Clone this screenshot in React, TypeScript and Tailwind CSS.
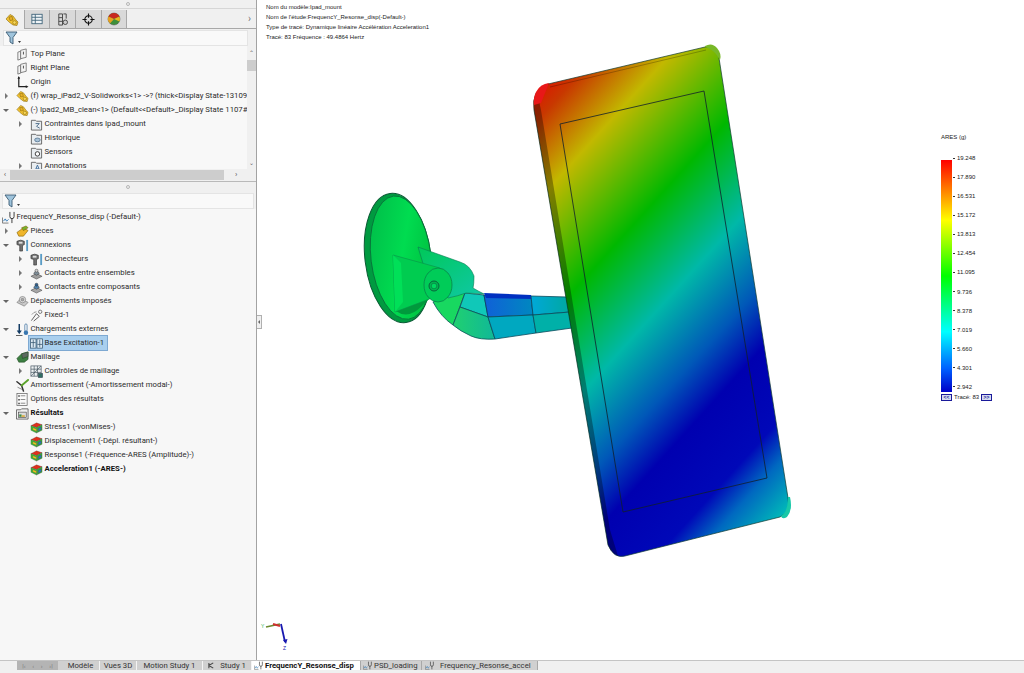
import type { ReactNode } from "react";

type IconName =
  | "plane" | "origin" | "part" | "folderS" | "folderH" | "folderC" | "folderA"
  | "study" | "pieces" | "bolt" | "contactA" | "contactB" | "fixtures" | "fixed"
  | "load" | "excite" | "mesh" | "meshCtl" | "damping" | "options" | "results" | "plot";

const icons: Record<IconName, ReactNode> = {
  plane: (
    <g fill="#f4f4f4" stroke="#6f6f6f" strokeWidth="0.9">
      <path d="M2 4.5 L5 3.5 V12 L2 13 Z" />
      <path d="M5 2.5 L11 1 V10 L5 11.5 Z" />
      <path d="M8 4 V7" stroke="#333" />
    </g>
  ),
  origin: (
    <g stroke="#222" fill="#222">
      <path d="M3 1 V11.5 H12" fill="none" strokeWidth="1.3" />
      <path d="M3 0 L1.6 3 H4.4 Z M13.5 11.5 L10.5 10 V13 Z" stroke="none" />
    </g>
  ),
  part: (
    <g stroke="#8a6a10" strokeWidth="0.6">
      <path d="M1 6 L5 1.5 L8 3 L11 7 L13 9 L12 12.5 L8 12 L4 9 Z" fill="#f2c230" />
      <path d="M4 4 L7 3.5 L8 7 L5 7.5 Z" fill="#e8b028" />
      <circle cx="9.5" cy="9.5" r="1.8" fill="#f8d858" />
    </g>
  ),
  folderS: <Folder glyph={<path d="M6 6 L10 6 L7 9 L10.5 11" fill="none" stroke="#4a6a88" strokeWidth="1" />} />,
  folderH: <Folder glyph={<ellipse cx="8" cy="8.5" rx="3" ry="2" fill="#a9c3d8" stroke="#4a6a88" strokeWidth="0.8" />} />,
  folderC: <Folder glyph={<circle cx="8" cy="8.5" r="2.4" fill="#fff" stroke="#333" strokeWidth="1" />} />,
  folderA: <Folder glyph={<path d="M5.5 11.5 L8 5.5 L10.5 11.5 M6.5 9.5 H9.5" fill="none" stroke="#3b6a9a" strokeWidth="1" />} />,
  study: (
    <g fill="none" strokeWidth="1">
      <path d="M0.5 7 V13 H7" stroke="#777" />
      <path d="M1.5 11 L3.5 8.5 L5 11 L7 9" stroke="#2f78b8" />
      <path d="M8.5 1 V6 A2 2 0 0 0 13 6 V1 M10.7 8 V13" stroke="#333" />
    </g>
  ),
  pieces: (
    <g stroke="#7a5a00" strokeWidth="0.6">
      <path d="M1 8 L8 3 L13 6 L8 12 L3 12 Z" fill="#efb52a" />
      <path d="M6 3 L11 1 L13 3 L8 6 Z" fill="#77b32c" />
    </g>
  ),
  bolt: (
    <g>
      <path d="M1 2.5 Q5 0 9 2.5 V6 L7 7 V13 H4 V7 L1 6 Z" fill="#707070" stroke="#222" strokeWidth="0.6" />
      <rect x="3" y="3" width="4" height="2" fill="#ddd" />
      <rect x="11" y="1" width="2" height="12" fill="#5a9cc5" />
    </g>
  ),
  contactA: (
    <g stroke="#333" strokeWidth="0.5">
      <path d="M1 10 L7 7 L13 10 L7 13 Z" fill="#9d9d9d" />
      <path d="M4 7 Q7 1 10 7 L7 9 Z" fill="#7f8f9a" />
      <circle cx="7" cy="4" r="1.6" fill="#d2d2d2" />
    </g>
  ),
  contactB: (
    <g stroke="#333" strokeWidth="0.5">
      <path d="M1 10 L7 7 L13 10 L7 13 Z" fill="#a6a6a6" />
      <path d="M4 7 Q7 1 10 7 L7 9 Z" fill="#4f82ad" />
      <circle cx="7" cy="4" r="1.6" fill="#2c5f90" />
    </g>
  ),
  fixtures: (
    <g stroke="#777" strokeWidth="0.7" fill="#c9c9c9">
      <path d="M1 8 L5 4 L13 8 L9 12 Z" />
      <circle cx="7" cy="5" r="3.4" fill="#dcdcdc" />
      <circle cx="7" cy="5" r="1.4" fill="#aaa" />
    </g>
  ),
  fixed: (
    <g fill="none" stroke="#444" strokeWidth="0.9">
      <path d="M1.5 12.5 L7 5 L10 8 L4 13" />
      <path d="M2 6 Q4 3 7 3" stroke="#888" />
      <circle cx="11" cy="3" r="1.8" stroke="#666" />
    </g>
  ),
  load: (
    <g>
      <path d="M3.5 1 V9" stroke="#123a62" strokeWidth="1.6" />
      <path d="M0.8 8 H6.2 L3.5 12 Z" fill="#123a62" />
      <rect y="13" width="7" height="1" fill="#555" />
      <rect x="9.5" y="1" width="2.4" height="8" rx="1.2" fill="#fff" stroke="#3a6d9c" strokeWidth="0.8" />
      <circle cx="10.7" cy="10.5" r="2.4" fill="#3a77b0" />
    </g>
  ),
  excite: (
    <g fill="#dce9f2" stroke="#35556f" strokeWidth="0.8">
      <rect x="0.5" y="2" width="6" height="10" />
      <rect x="7.5" y="2" width="6" height="10" />
      <path d="M1 6 H6 M3.5 3 V11 M8 8 H13 M10.5 3 V11" />
    </g>
  ),
  mesh: (
    <g stroke="#234a25" strokeWidth="0.6">
      <path d="M1 8 L6 3 L13 1 V9 L9 12 L3 12 Z" fill="#3d7f42" />
      <path d="M6 3 L13 1 V6 L7 8 Z" fill="#5c6a60" />
    </g>
  ),
  meshCtl: (
    <g fill="#eef1f3" stroke="#3f4f5a" strokeWidth="0.7">
      <rect x="1" y="1" width="11" height="11" />
      <path d="M1 4.5 H12 M1 8 H12 M4.5 1 V12 M8 1 V12 M1 12 L12 1" />
      <rect x="9" y="9" width="4.5" height="4.5" fill="#2f6f62" />
    </g>
  ),
  damping: (
    <g fill="none" strokeLinecap="round">
      <path d="M1 3 L6 7 L8 13" stroke="#333" strokeWidth="1.6" />
      <path d="M6 7 L13 1" stroke="#5ba32b" strokeWidth="2" />
      <path d="M2 9 L6 11" stroke="#888" strokeWidth="1" />
    </g>
  ),
  options: (
    <g>
      <rect x="1" y="0.5" width="11" height="13" fill="#fafafa" stroke="#666" strokeWidth="0.8" />
      <path d="M5 3 H10 M5 7 H10 M5 11 H10" stroke="#777" strokeWidth="0.9" />
      <path d="M2.5 2.5 H4 V4 H2.5 Z M2.5 6.5 H4 V8 H2.5 Z M2.5 10.5 H4 V12 H2.5 Z" fill="#333" />
    </g>
  ),
  results: (
    <g>
      <path d="M0.5 3 H5 L6 2 H13 V13 H0.5 Z" fill="#f2f2f2" stroke="#555" strokeWidth="0.9" />
      <rect x="2.5" y="5.5" width="8.5" height="6" fill="#dcdcdc" stroke="#333" strokeWidth="0.6" />
      <path d="M3.5 10.5 V8 H6 V10.5 Z" fill="#3c8c45" />
      <path d="M6 10.5 V9 H9.5 V10.5 Z" fill="#d8a320" />
    </g>
  ),
  plot: (
    <g stroke="#444" strokeWidth="0.3">
      <path d="M1 5 L7 2 L13 4 L7 7 Z" fill="#e0301c" />
      <path d="M1 5 L7 7 V13 L1 10 Z" fill="#3cb832" />
      <path d="M7 7 L13 4 V10 L7 13 Z" fill="#38a838" />
      <path d="M3 7 L7 9 V11 L3 9.5 Z" fill="#f0c91c" />
      <path d="M9 8 L12 6.5 V9 L9 11 Z" fill="#2f6fd0" />
    </g>
  ),
};

function Folder({ glyph }: { glyph: ReactNode }) {
  return (
    <g>
      <path d="M1.5 13 V2.5 H6 L7 3.5 H12.5 V13 Z" fill="#e9edf0" stroke="#555" strokeWidth="0.9" />
      {glyph}
    </g>
  );
}

function Icon({ name, className = "w-[13px] h-[13px]" }: { name: IconName; className?: string }) {
  return (
    <svg viewBox="0 0 14 14" className={`${className} shrink-0`}>
      {icons[name]}
    </svg>
  );
}

type Node = {
  label: string;
  icon: IconName;
  depth: 0 | 1 | 2;
  arrow?: "closed" | "open";
  bold?: boolean;
  selected?: boolean;
};

const topTree: Node[] = [
  { label: "Top Plane", icon: "plane", depth: 1 },
  { label: "Right Plane", icon: "plane", depth: 1 },
  { label: "Origin", icon: "origin", depth: 1 },
  { label: "(f) wrap_iPad2_V-Solidworks<1> ->? (thick<Display State-13109", icon: "part", depth: 1, arrow: "closed" },
  { label: "(-) Ipad2_MB_clean<1> (Default<<Default>_Display State 1107#", icon: "part", depth: 1, arrow: "open" },
  { label: "Contraintes dans Ipad_mount", icon: "folderS", depth: 2, arrow: "closed" },
  { label: "Historique", icon: "folderH", depth: 2 },
  { label: "Sensors", icon: "folderC", depth: 2 },
  { label: "Annotations", icon: "folderA", depth: 2, arrow: "closed" },
];

const studyTree: Node[] = [
  { label: "FrequencY_Resonse_disp (-Default-)", icon: "study", depth: 0 },
  { label: "Pièces", icon: "pieces", depth: 1, arrow: "closed" },
  { label: "Connexions", icon: "bolt", depth: 1, arrow: "open" },
  { label: "Connecteurs", icon: "bolt", depth: 2, arrow: "closed" },
  { label: "Contacts entre ensembles", icon: "contactA", depth: 2, arrow: "closed" },
  { label: "Contacts entre composants", icon: "contactB", depth: 2, arrow: "closed" },
  { label: "Déplacements imposés", icon: "fixtures", depth: 1, arrow: "open" },
  { label: "Fixed-1", icon: "fixed", depth: 2 },
  { label: "Chargements externes", icon: "load", depth: 1, arrow: "open" },
  { label: "Base Excitation-1", icon: "excite", depth: 2, selected: true },
  { label: "Maillage", icon: "mesh", depth: 1, arrow: "open" },
  { label: "Contrôles de maillage", icon: "meshCtl", depth: 2, arrow: "closed" },
  { label: "Amortissement (-Amortissement modal-)", icon: "damping", depth: 1 },
  { label: "Options des résultats", icon: "options", depth: 1 },
  { label: "Résultats", icon: "results", depth: 1, arrow: "open", bold: true },
  { label: "Stress1 (-vonMises-)", icon: "plot", depth: 2 },
  { label: "Displacement1 (-Dépl. résultant-)", icon: "plot", depth: 2 },
  { label: "Response1 (-Fréquence-ARES (Amplitude)-)", icon: "plot", depth: 2 },
  { label: "Acceleration1 (-ARES-)", icon: "plot", depth: 2, bold: true },
];

const legendValues = ["19.248", "17.890", "16.531", "15.172", "13.813", "12.454", "11.095", "9.736", "8.378", "7.019", "5.660", "4.301", "2.942"];

const caption = [
  "Nom du modèle:Ipad_mount",
  "Nom de l'étude:FrequencY_Resonse_disp(-Default-)",
  "Type de tracé: Dynamique linéaire Accélération Acceleration1",
  "Tracé: 83 Fréquence : 49.4864 Hertz",
];

function TreeRow({ node }: { node: Node }) {
  const indent = node.depth === 2 ? "pl-[16px]" : "pl-[2px]";
  return (
    <div className={`flex items-center h-[14px] whitespace-nowrap ${indent}`}>
      {node.depth > 0 && (
        <span className="w-[8px] mr-[6px] shrink-0 flex justify-center">
          {node.arrow === "closed" && <span className="w-0 h-0 border-y-[3px] border-y-transparent border-l-[3px] border-l-[#777]" />}
          {node.arrow === "open" && <span className="w-0 h-0 border-x-[3px] border-x-transparent border-t-[3px] border-t-[#666]" />}
        </span>
      )}
      <span className={`flex items-center h-[14px] shrink-0 ${node.selected ? "bg-[#a9cfee] outline outline-1 outline-[#7ea9d2] pr-[3px] -ml-[1px] pl-[1px]" : ""}`}>
        <Icon name={node.icon} />
        <span className={`ml-[1.5px] ${node.bold ? "font-bold text-[#111]" : "text-[#2b2b2b]"}`}>{node.label}</span>
      </span>
    </div>
  );
}

function Funnel() {
  return (
    <svg viewBox="0 0 16 14" className="w-[16px] h-[14px]">
      <path d="M1 1 H12 L8 6.5 V13 L5 11 V6.5 Z" fill="#9fc4dc" stroke="#3a5a72" strokeWidth="0.9" />
      <path d="M13 10 H16 L14.5 12 Z" fill="#333" />
    </svg>
  );
}

function Grip() {
  return (
    <div className="h-[9px] flex items-center justify-center">
      <span className="w-[4px] h-[4px] rounded-full border border-[#b5b5b5]" />
    </div>
  );
}

function ModelTabs() {
  return (
    <div className="flex items-end h-[20px] border-b border-[#a8a8a8]">
      <div className="w-[25px] h-[19px] flex items-center justify-center bg-[#f0f0f0] border-r border-[#a8a8a8] -mb-px">
        <Icon name="part" className="w-[14px] h-[14px]" />
      </div>
      <div className="w-[25px] h-[18px] flex items-center justify-center bg-[#d9d9d9] border-r border-[#a8a8a8]">
        <svg viewBox="0 0 14 14" className="w-[12px] h-[12px]">
          <rect x="1" y="1.5" width="12" height="11" fill="#eef3f6" stroke="#3b6178" />
          <path d="M1 5 H13 M1 8.5 H13 M5 1.5 V12.5" stroke="#3b6178" />
        </svg>
      </div>
      <div className="w-[26px] h-[18px] flex items-center justify-center bg-[#d9d9d9] border-r border-[#a8a8a8]">
        <svg viewBox="0 0 14 14" className="w-[13px] h-[13px]" fill="none" stroke="#444">
          <path d="M3 1 H7 V13 H3 Z M3 5 H7 M3 9 H7" />
          <circle cx="10" cy="10" r="2.4" fill="#ccc" />
          <path d="M8 1 H11 V6" />
        </svg>
      </div>
      <div className="w-[26px] h-[18px] flex items-center justify-center bg-[#d9d9d9] border-r border-[#a8a8a8]">
        <svg viewBox="0 0 14 14" className="w-[13px] h-[13px]" fill="none" stroke="#111" strokeWidth="1.2">
          <circle cx="7" cy="7" r="4" />
          <path d="M7 0.5 V5 M7 9 V13.5 M0.5 7 H5 M9 7 H13.5" />
        </svg>
      </div>
      <div className="w-[25px] h-[18px] flex items-center justify-center bg-[#d9d9d9] border-r border-[#a8a8a8]">
        <svg viewBox="0 0 14 14" className="w-[14px] h-[14px]">
          <circle cx="7" cy="7" r="6" fill="#3f8f3a" stroke="#555" strokeWidth="0.5" />
          <path d="M7 7 L1.5 4.5 A6 6 0 0 1 12.5 4.5 Z" fill="#c8281e" />
          <path d="M7 7 L12.5 4.5 A6 6 0 0 1 12.5 9.5 Z" fill="#e8b81e" />
          <path d="M7 7 L1.5 4.5 A6 6 0 0 0 3 11.5 Z" fill="#e8a01e" />
        </svg>
      </div>
      <div className="flex-1 h-[18px] flex items-center justify-end pr-[5px]">
        <span className="text-[#777] text-[10px] leading-none">›</span>
      </div>
    </div>
  );
}

function Sidebar() {
  return (
    <aside className="w-[257px] shrink-0 flex flex-col bg-[#f0f0f0] border-r border-[#a3a3a3] font-['Roboto',sans-serif] text-[7.75px]">
      <div className="h-[9px] border-b border-[#d6d6d6] flex items-center justify-center">
        <span className="w-[4px] h-[4px] rounded-full border border-[#b5b5b5]" />
      </div>
      <ModelTabs />
      <div className="h-[16px] flex items-center mx-[3px] mr-[8px] mt-[1px] px-[1px] bg-[#f9f9f9] border border-[#e4e4e4]">
        <Funnel />
      </div>
      <div className="h-[123px] flex bg-[#f8f8f8] overflow-hidden">
        <div className="flex-1 min-w-0 overflow-hidden pt-[1px]">
          {topTree.map((n) => (
            <TreeRow key={n.label} node={n} />
          ))}
        </div>
        <div className="w-[9px] shrink-0 bg-[#f0f0f0] flex flex-col items-center pt-[4px]">
          <span className="text-[#666] text-[6px] leading-none">⌃</span>
          <span className="w-[9px] h-[11px] mt-[4px] bg-[#cdcdcd]" />
          <span className="text-[#666] text-[6px] leading-none mt-auto mb-[3px]">⌄</span>
        </div>
      </div>
      <div className="h-[11px] flex items-center bg-[#f0f0f0]">
        <span className="w-[10px] text-center text-[#555] text-[8px] leading-none">‹</span>
        <span className="w-[214px] h-[10px] bg-[#cdcdcd]" />
        <span className="ml-[11px] text-[#555] text-[8px] leading-none">›</span>
      </div>
      <div className="border-t border-[#b9b9b9] mt-[1px]">
        <Grip />
      </div>
      <div className="h-[16px] flex items-center mx-[2px] mt-[2px] px-[1px] bg-[#f9f9f9] border border-[#e4e4e4]">
        <Funnel />
      </div>
      <div className="flex-1 bg-[#f7f7f7] overflow-hidden pt-[1px]">
        {studyTree.map((n) => (
          <TreeRow key={n.label} node={n} />
        ))}
      </div>
    </aside>
  );
}

function Legend() {
  return (
    <div className="absolute left-[684px] top-[134px] w-[70px] font-['Liberation_Sans',sans-serif] text-[6px] text-[#222] leading-none">
      <div className="h-[8px] mb-[12.5px]">ARES (g)</div>
      <div className="flex h-[236px]">
        <div className="w-[11px] mt-[5.5px] h-[232px] bg-[linear-gradient(to_bottom,#ff0000_0%,#ff8000_13%,#ffff00_26%,#00ff00_50%,#00ffff_74%,#0060ff_90%,#0000c8_100%)]" />
        <div className="flex flex-col justify-between ml-[1px]">
          {legendValues.map((v) => (
            <div key={v} className="flex items-center h-[7px]">
              <span className="w-[2px] h-px bg-[#333] mr-[2px]" />
              <span>{v}</span>
            </div>
          ))}
        </div>
      </div>
      <div className="flex items-center mt-[3px] whitespace-nowrap">
        <span className="w-[11px] h-[7px] bg-[#d6dcf0] border border-[#1a1a9a] flex items-center justify-center text-[5px] text-[#1a1a9a] font-bold">&lt;&lt;</span>
        <span className="ml-[2px] w-[27px]">Tracé: 83</span>
        <span className="w-[11px] h-[7px] bg-[#d6dcf0] border border-[#1a1a9a] flex items-center justify-center text-[5px] text-[#1a1a9a] font-bold">&gt;&gt;</span>
      </div>
    </div>
  );
}

function Model() {
  return (
    <svg viewBox="257 0 767 660" className="absolute inset-0 w-[767px] h-[660px]">
      <defs>
        <linearGradient id="phone" gradientUnits="userSpaceOnUse" x1="540" y1="90" x2="888" y2="405">
          <stop offset="0" stopColor="#d81c00" />
          <stop offset="0.04" stopColor="#c83800" />
          <stop offset="0.155" stopColor="#c2b800" />
          <stop offset="0.34" stopColor="#00b800" />
          <stop offset="0.5" stopColor="#00b8a8" />
          <stop offset="0.63" stopColor="#0058b8" />
          <stop offset="0.72" stopColor="#0000b0" />
          <stop offset="0.85" stopColor="#0008b8" />
          <stop offset="0.91" stopColor="#0068c0" />
          <stop offset="1" stopColor="#00c0b8" />
        </linearGradient>
        <linearGradient id="cup" x1="0" y1="0" x2="1" y2="0.6">
          <stop offset="0" stopColor="#00b848" />
          <stop offset="0.6" stopColor="#00dc50" />
          <stop offset="1" stopColor="#00c040" />
        </linearGradient>
        <linearGradient id="cellA" x1="0" y1="0" x2="1" y2="0">
          <stop offset="0" stopColor="#1060d8" />
          <stop offset="1" stopColor="#0088c0" />
        </linearGradient>
        <linearGradient id="cellB" x1="0" y1="0" x2="1" y2="0">
          <stop offset="0" stopColor="#00a8d8" />
          <stop offset="1" stopColor="#00a8a0" />
        </linearGradient>
        <linearGradient id="cellC" x1="0" y1="0" x2="1" y2="0">
          <stop offset="0" stopColor="#20d070" />
          <stop offset="1" stopColor="#10b898" />
        </linearGradient>
        <linearGradient id="knuckle" x1="0" y1="0" x2="1" y2="1">
          <stop offset="0" stopColor="#00c858" />
          <stop offset="1" stopColor="#10c8a8" />
        </linearGradient>
      </defs>

      {/* suction cup */}
      <g transform="rotate(-7 398 258)">
        <ellipse cx="398" cy="258" rx="33" ry="65" fill="#009a40" stroke="#0a5a34" strokeWidth="1" />
        <ellipse cx="401" cy="258" rx="30" ry="62" fill="url(#cup)" stroke="#0a6a38" strokeWidth="0.8" />
      </g>
      <path d="M396 311 Q408 320 422 306 L430 298 L400 298 Z" fill="#009a3c" />

      {/* arm */}
      <path d="M433 302 Q441 317 453 325 L465 293 L448 296 Z" fill="#18d860" stroke="#0a5058" strokeWidth="0.8" />
      <path d="M465 293 L484 295 L488 317 L460 307 Z" fill="#10c8b8" stroke="#0a4a5c" strokeWidth="0.8" />
      <path d="M484 295 L531 296 L533 315 L488 317 Z" fill="url(#cellA)" stroke="#0a3a60" strokeWidth="0.8" />
      <path d="M484 293 L531 295 L532 299 L486 298 Z" fill="#0030c0" />
      <path d="M531 296 L567 297 L570 312 L533 315 Z" fill="url(#cellB)" stroke="#0a4a5c" strokeWidth="0.8" />
      <path d="M460 307 L488 317 L495 339 Q480 340 471 336 Q460 331 453 325 Z" fill="url(#cellC)" stroke="#0a5058" strokeWidth="0.8" />
      <path d="M488 317 L533 315 L536 333 L495 339 Z" fill="#00a8c0" stroke="#0a4a5c" strokeWidth="0.8" />
      <path d="M533 315 L570 312 L572 328 L536 333 Z" fill="#00b0a8" stroke="#0a4a5c" strokeWidth="0.8" />

      {/* bracket */}
      <path d="M418 247 L460 262 Q470 265 474 276 Q474 284 473 288 Q478 291 484 294 L466 293 Q458 296 448 298 L425 270 Z" fill="url(#knuckle)" stroke="#0a7a50" strokeWidth="0.6" />
      <path d="M393 255 L440 268 L440 295 L395 312 Z" fill="#00cc50" stroke="#08904a" strokeWidth="0.6" />
      <path d="M393 255 L401 263 L403 302 L395 312 Z" fill="#00e058" />
      <ellipse cx="438" cy="285" rx="14" ry="17" fill="#00cc58" stroke="#0a7a48" strokeWidth="0.7" />
      <circle cx="434" cy="286" r="5" fill="#00b850" stroke="#0a5a3a" strokeWidth="0.9" />
      <circle cx="434" cy="286" r="2.8" fill="#00d860" stroke="#0a6a40" strokeWidth="0.6" />

      {/* tablet */}
      <path d="M548 84 L705 47 Q717 45 719 58 L788 498 Q791 512 780 517 L625 556 Q614 559 608 545 L534 110 Q531 90 548 84 Z" fill="url(#phone)" stroke="#103a30" strokeOpacity="0.7" strokeWidth="1" />
      <path d="M534 110 L608 545 Q611 553 618 556 L610 530 L541 110 Q538 100 541 92 Q534 98 534 110 Z" fill="#000" fillOpacity="0.32" />
      <path d="M550 87 L706 50" stroke="#000" strokeOpacity="0.35" strokeWidth="0.7" fill="none" />
      <path d="M560 124 L704 91 L767 478 L623 512 Z" fill="none" stroke="#10202c" strokeWidth="0.8" />
      <path d="M536 92 Q540 84 549 83 L541 103 L534 105 Q533 98 536 92 Z" fill="#e81818" />
      <path d="M705 46 Q712 42 717 48 Q722 54 720 60 L716 54 Q712 49 705 47 Z" fill="#78b828" />
      <path d="M790 497 Q793 510 787 517 Q782 520 781 516 Q788 512 788 497 Z" fill="#18c8a8" />

      {/* triad */}
      <path d="M266 627 L280 624" stroke="#6a8a30" strokeWidth="1.6" />
      <path d="M273 624 L280 626" stroke="#d03030" strokeWidth="2" />
      <path d="M281 624 L285 642" stroke="#1818b0" strokeWidth="1.8" />
      <path d="M283 640 L287.5 639 L286 644 Z" fill="#1818b0" />
      <text x="261" y="628" fontSize="5" fill="#30b050" fontFamily="Liberation Sans, sans-serif">Y</text>
      <text x="283" y="650" fontSize="5" fill="#1818b0" fontFamily="Liberation Sans, sans-serif">Z</text>
    </svg>
  );
}

function Viewport() {
  return (
    <main className="relative flex-1 bg-white overflow-hidden">
      <Model />
      <div className="relative pl-[9px] pt-[2px] font-['Liberation_Sans',sans-serif] text-[6px] leading-[10px] text-[#222]">
        {caption.map((line) => (
          <div key={line}>{line}</div>
        ))}
      </div>
      <Legend />
      <div className="absolute left-0 top-[315px] w-[5px] h-[14px] bg-[#f0f0f0] border border-l-0 border-[#b0b0b0] flex items-center justify-center">
        <span className="w-0 h-0 border-y-[2px] border-y-transparent border-r-[2px] border-r-[#666]" />
      </div>
    </main>
  );
}

const tabs = [
  { label: "Modèle", w: "w-[42px] pl-[4px]" },
  { label: "Vues 3D", w: "w-[37px]" },
  { label: "Motion Study 1", w: "w-[66px]" },
];

function BottomTabs() {
  return (
    <footer className="h-[13px] bg-[#f0f0f0] font-['Roboto',sans-serif] text-[7.75px] text-[#333] whitespace-nowrap">
      <div className="h-[10px] flex border-t border-[#c4c4c4]">
        <div className="w-[17px]" />
        <div className="w-[41px] bg-[#b4b4b4] flex items-center justify-around px-[2px] text-[#777] text-[6px]">
          <span>|‹</span>
          <span>‹</span>
          <span>›</span>
          <span>›|</span>
        </div>
        {tabs.map((t) => (
          <div key={t.label} className={`${t.w} bg-[#d0d0d0] border-r border-[#f4f4f4] flex items-center justify-center`}>
            {t.label}
          </div>
        ))}
        <div className="w-[49px] bg-[#d0d0d0] border-r border-[#f4f4f4] flex items-center justify-center gap-[5px]">
          <svg viewBox="0 0 8 8" className="w-[7px] h-[7px]">
            <path d="M1 1 V7 M1 4 L6 1 M1 4 L6 7" stroke="#444" strokeWidth="1.2" fill="none" />
          </svg>
          Study 1
        </div>
        <div className="w-[109px] bg-white flex items-center pl-[1px] gap-[2px] font-bold text-[#111] border-r border-[#a8a8a8]">
          <Icon name="study" className="w-[9px] h-[9px] ml-[1px]" />
          FrequencY_Resonse_disp
        </div>
        <div className="w-[61px] bg-[#d0d0d0] border-r border-[#a8a8a8] flex items-center pl-[2px] gap-[2px]">
          <Icon name="study" className="w-[9px] h-[9px]" />
          PSD_loading
        </div>
        <div className="w-[116px] bg-[#d0d0d0] border-r border-[#a8a8a8] flex items-center pl-[3px] gap-[6px]">
          <Icon name="study" className="w-[9px] h-[9px]" />
          Frequency_Resonse_accel
        </div>
      </div>
    </footer>
  );
}

export default function App() {
  return (
    <div className="w-[1024px] h-[673px] flex flex-col overflow-hidden bg-white">
      <div className="flex-1 flex min-h-0">
        <Sidebar />
        <Viewport />
      </div>
      <BottomTabs />
    </div>
  );
}
